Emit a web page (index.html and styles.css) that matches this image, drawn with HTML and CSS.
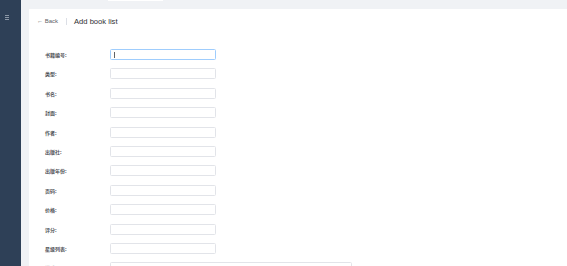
FILE: index.html
```html
<!DOCTYPE html>
<html lang="zh">
<head>
  <meta charset="UTF-8" />
  <title>Add book list</title>
  <link rel="stylesheet" href="styles.css">
</head>
<body>
  <div class="layout">
    <!-- Barra lateral -->
    <aside class="sidebar">
      <svg class="menu-icon" width="4" height="5" viewBox="0 0 4 5" xmlns="http://www.w3.org/2000/svg">
        <rect x="0" y="0" width="4" height="1" fill="#8b97a6" />
        <rect x="0" y="2" width="4" height="1" fill="#8b97a6" />
        <rect x="0" y="4" width="4" height="1" fill="#8b97a6" />
      </svg>
    </aside>

    <main class="main">
      <div class="topstrip">
        <div class="tab"></div>
      </div>

      <section class="card">
        <div class="page-header">
          <span class="back">&larr; Back</span>
          <span class="divider"></span>
          <span class="title">Add book list</span>
        </div>

        <form class="book-form">
          <div class="form-item">
            <label class="form-label">书籍编号:</label>
            <div class="input is-focus"><span class="caret"></span></div>
          </div>
          <div class="form-item">
            <label class="form-label">类型:</label>
            <div class="input"></div>
          </div>
          <div class="form-item">
            <label class="form-label">书名:</label>
            <div class="input"></div>
          </div>
          <div class="form-item">
            <label class="form-label">封面:</label>
            <div class="input"></div>
          </div>
          <div class="form-item">
            <label class="form-label">作者:</label>
            <div class="input"></div>
          </div>
          <div class="form-item">
            <label class="form-label">出版社:</label>
            <div class="input"></div>
          </div>
          <div class="form-item">
            <label class="form-label">出版年份:</label>
            <div class="input"></div>
          </div>
          <div class="form-item">
            <label class="form-label">页码:</label>
            <div class="input"></div>
          </div>
          <div class="form-item">
            <label class="form-label">价格:</label>
            <div class="input"></div>
          </div>
          <div class="form-item">
            <label class="form-label">评分:</label>
            <div class="input"></div>
          </div>
          <div class="form-item">
            <label class="form-label">星级列表:</label>
            <div class="input"></div>
          </div>
          <div class="form-item">
            <label class="form-label">描述:</label>
            <div class="input textarea"></div>
          </div>
        </form>
      </section>
    </main>
  </div>
</body>
</html>
```

FILE: styles.css
```css
html, body {
  margin: 0;
  height: 100%;
  overflow: hidden;
}

body {
  font-family: "Liberation Sans", "Noto Sans CJK SC", sans-serif;
  background: #f0f2f5;
}

.layout {
  display: flex;
  height: 266px;
}

.sidebar {
  width: 21px;
  flex-shrink: 0;
  background: #2e4057;
  padding: 15px 0 0 5px;
  box-sizing: border-box;
}

.menu-icon {
  display: block;
}

.main {
  flex: 1;
  display: flex;
  flex-direction: column;
  padding-left: 8px;
  min-width: 0;
}

.topstrip {
  height: 9px;
  flex-shrink: 0;
}

.tab {
  width: 55px;
  height: 1px;
  margin-left: 79px;
  background: #fff;
}

.card {
  flex: 1;
  background: #fff;
  padding: 0 0 0 8px;
}

.page-header {
  display: flex;
  align-items: center;
  height: 24px;
}

.back {
  font-size: 6px;
  color: #606266;
}

.divider {
  width: 1px;
  height: 7px;
  background: #dcdfe6;
  margin: 0 7px 0 8px;
}

.title {
  font-size: 7.6px;
  color: #303133;
}

.book-form {
  display: flex;
  flex-direction: column;
  gap: 8.4px;
  padding: 16px 0 0 8px;
}

.form-item {
  display: flex;
  align-items: center;
  height: 11px;
}

.form-label {
  width: 65px;
  flex-shrink: 0;
  font-family: "Noto Sans CJK SC", sans-serif;
  font-size: 5px;
  font-weight: bold;
  color: #505257;
}

.input {
  width: 106px;
  height: 11px;
  box-sizing: border-box;
  border: 1px solid #e2e4e9;
  border-radius: 1.5px;
  display: flex;
  align-items: center;
  padding-left: 3px;
}

.input.is-focus {
  border-color: #9fcdfd;
}

.input.textarea {
  width: 242px;
}

.caret {
  width: 1px;
  height: 6px;
  background: #606266;
}
```
